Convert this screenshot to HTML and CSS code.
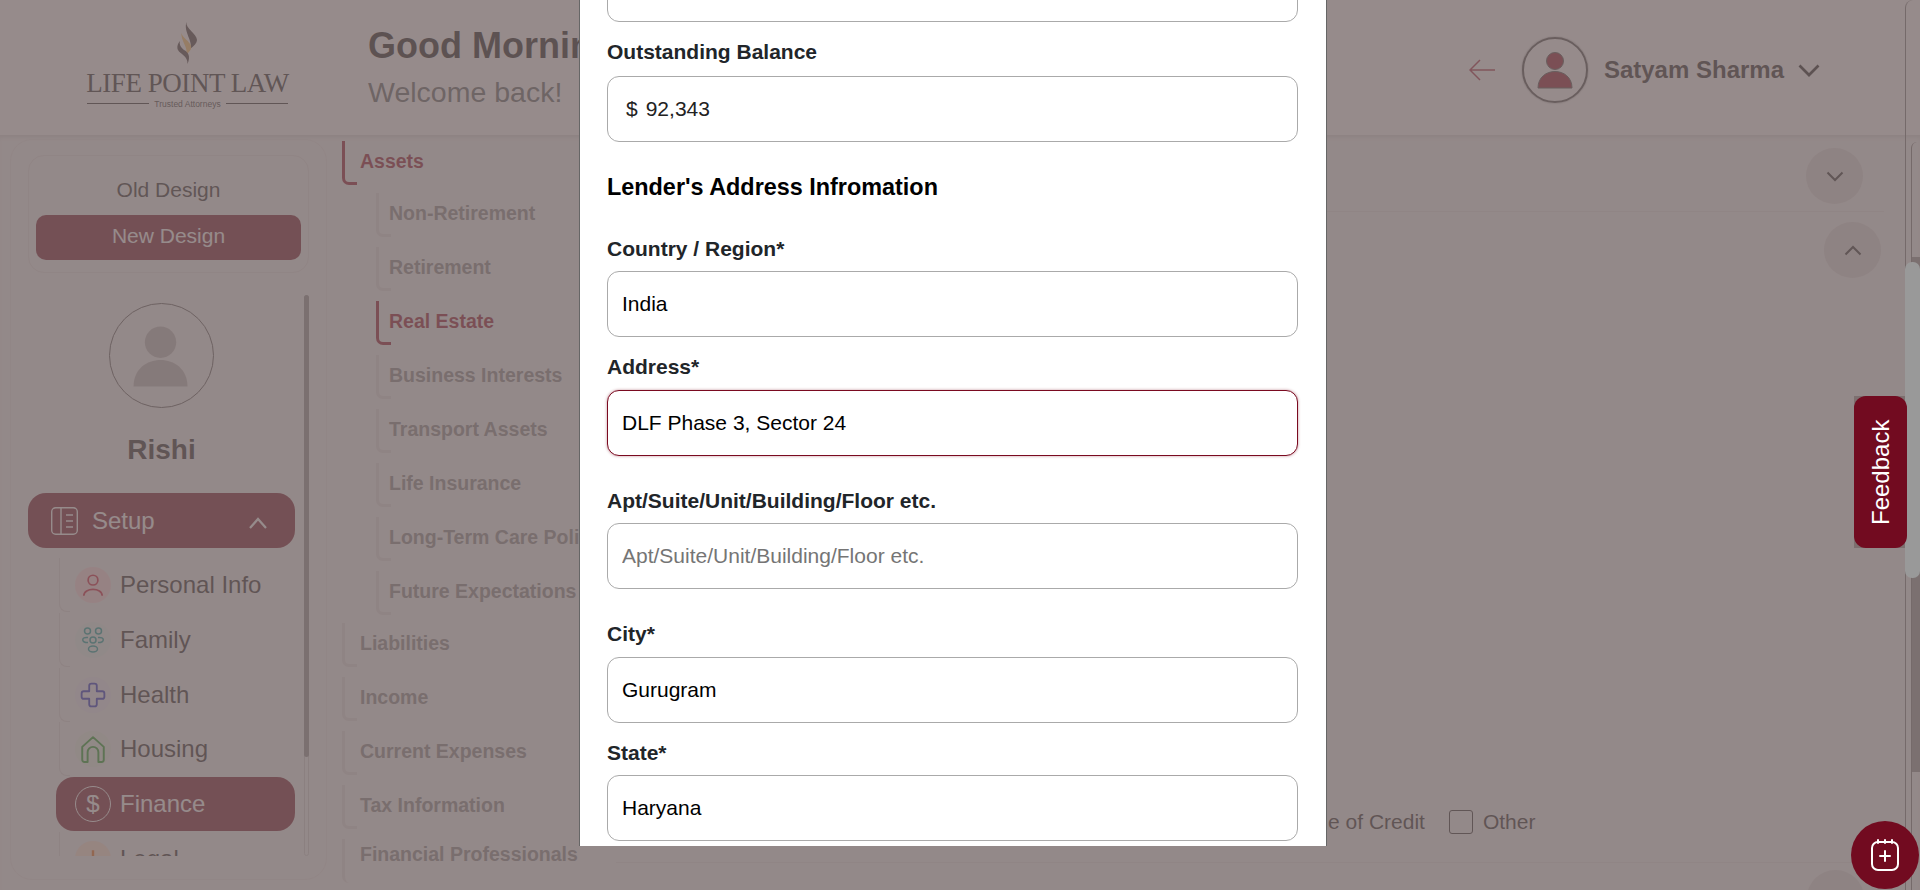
FILE: index.html
```html
<!DOCTYPE html>
<html lang="en">
<head>
<meta charset="UTF-8">
<title>Life Point Law</title>
<link rel="stylesheet" href="styles.css">
</head>
<body>

<header class="topbar">
    <div class="logo">
        <svg class="logo-flame" viewBox="0 0 21 42" width="21" height="42">
            <path fill="#3a3233" d="M9.5 0C8 6 20 12 20 18c0 3-3 6-7 9 4-7-7-17-3.500-27z"/>
            <path fill="#fec460" d="M4.500 10C4 16 16 20 14 27c-1 2-3 4-5 6 3-7-6-15-4.500-23z"/>
            <path fill="#3a3233" d="M3 19c-3 3-3 7-2 9 2 4 10 6 9.500 14 3.500-8 .5-12-3.500-14-3-3-5-5-4-9z"/>
        </svg>
        <div class="logo-name">LIFE POINT LAW</div>
        <div class="logo-tag"><span class="logo-rule"></span>Trusted Attorneys<span class="logo-rule"></span></div>
    </div>
    <div class="greeting">
        <h1>Good Morning, Satyam</h1>
        <p>Welcome back!</p>
    </div>
    <div class="account">
        <svg class="back-arrow" viewBox="0 0 26 22" width="26" height="22"><path d="M11 1 1 11l10 10M1 11h25" fill="none" stroke="#a8203a" stroke-width="1.500"/></svg>
        <div class="account-avatar">
            <svg viewBox="0 0 62 62" width="62" height="62">
                <circle cx="31" cy="22" r="8.500" fill="#90081f" stroke="#444" stroke-width="1"/>
                <path d="M14 49c0-22 34-22 34 0z" fill="#90081f" stroke="#444" stroke-width="1"/>
            </svg>
        </div>
        <span class="account-name">Satyam Sharma</span>
        <svg viewBox="0 0 22 13" width="22" height="13"><path d="M1.500 1.500 11 11l9.500-9.500" fill="none" stroke="#111" stroke-width="2.700"/></svg>
    </div>
</header>

<div class="page-body">
    <aside class="sidebar">
        <div class="design-switch">
            <div class="design-old">Old Design</div>
            <div class="design-new">New Design</div>
        </div>
        <div class="side-scroll">
            <div class="side-inner">
                <div class="profile-pic">
                    <svg viewBox="0 0 105 105" width="103" height="103">
                        <ellipse cx="51.500" cy="39" rx="16" ry="16" fill="#b9b9b9"/>
                        <path d="M24 84c0-36 55-36 55 0 0 0 0 0-3 0H27c-3 0-3 0-3 0z" fill="#b9b9b9"/>
                    </svg>
                </div>
                <div class="profile-name">Rishi</div>
                <div class="setup-btn">
                    <svg viewBox="0 0 27 28" width="27" height="28" fill="none" stroke="#fff" stroke-width="1.400">
                        <rect x=".7" y=".7" width="25.600" height="26.600" rx="4"/>
                        <path d="M10 1v26M15 8h7M15 14h7M15 20h7"/>
                    </svg>
                    <span>Setup</span>
                    <svg class="setup-chev" viewBox="0 0 18 12" width="18" height="12"><path d="M1 11 9 2l8 9" fill="none" stroke="#fff" stroke-width="2.200"/></svg>
                </div>
                <ul class="side-menu">
                    <li class="side-item">
                        <span class="side-icon side-icon-red">
                            <svg viewBox="0 0 24 24" width="26" height="26" fill="none" stroke="#d1102f" stroke-width="1.600"><circle cx="12" cy="7.500" r="4.500"/><path d="M3.500 22c0-8 17-8 17 0"/></svg>
                        </span>
                        Personal Info
                    </li>
                    <li class="side-item">
                        <span class="side-icon side-icon-teal">
                            <svg viewBox="0 0 26 26" width="26" height="26" fill="none" stroke="#0c9c98" stroke-width="1.500"><circle cx="7.500" cy="4" r="3"/><circle cx="18.500" cy="4" r="3"/><circle cx="13" cy="13" r="3"/><ellipse cx="13" cy="22" rx="4.500" ry="3"/><path d="M8 10.500c-7-1-7 5 0 5M18 10.500c7-1 7 5 0 5"/></svg>
                        </span>
                        Family
                    </li>
                    <li class="side-item">
                        <span class="side-icon side-icon-blue">
                            <svg viewBox="0 0 24 24" width="26" height="26" fill="none" stroke="#1c22c0" stroke-width="1.700" stroke-linejoin="round"><path d="M8.500 3.500a2 2 0 0 1 2-2h3a2 2 0 0 1 2 2v5h5a2 2 0 0 1 2 2v3a2 2 0 0 1-2 2h-5v5a2 2 0 0 1-2 2h-3a2 2 0 0 1-2-2v-5h-5a2 2 0 0 1-2-2v-3a2 2 0 0 1 2-2h5z"/></svg>
                        </span>
                        Health
                    </li>
                    <li class="side-item">
                        <span class="side-icon side-icon-green">
                            <svg viewBox="0 0 24 26" width="26" height="28" fill="none" stroke="#159a1c" stroke-width="1.800" stroke-linejoin="round"><path d="M2 11 12 2l10 9v12a2 2 0 0 1-2 2h-3V16a5 5 0 0 0-10 0v9H4a2 2 0 0 1-2-2z"/></svg>
                        </span>
                        Housing
                    </li>
                    <li class="side-item side-item-active">
                        <span class="side-icon side-icon-dollar">$</span>
                        Finance
                    </li>
                    <li class="side-item">
                        <span class="side-icon side-icon-orange">
                            <svg viewBox="0 0 24 24" width="26" height="26" fill="none" stroke="#ee6a10" stroke-width="2.200"><path d="M12 4v18M3 11h18"/></svg>
                        </span>
                        Legal
                    </li>
                </ul>
            </div>
            <div class="side-bar"><div class="side-thumb"></div></div>
        </div>
    </aside>

    <nav class="subnav">
        <div class="nav-link nav-active">Assets</div>
        <div class="nav-sub">
            <div class="nav-link">Non-Retirement</div>
            <div class="nav-link">Retirement</div>
            <div class="nav-link nav-active">Real Estate</div>
            <div class="nav-link">Business Interests</div>
            <div class="nav-link">Transport Assets</div>
            <div class="nav-link">Life Insurance</div>
            <div class="nav-link">Long-Term Care Policy</div>
            <div class="nav-link">Future Expectations</div>
        </div>
        <div class="nav-link">Liabilities</div>
        <div class="nav-link">Income</div>
        <div class="nav-link">Current Expenses</div>
        <div class="nav-link">Tax Information</div>
        <div class="nav-link nav-last">Financial Professionals</div>
    </nav>

    <main class="content">
        <div class="acc-row">
            <span class="round-btn">
                <svg viewBox="0 0 18 11" width="18" height="11"><path d="M1.500 1.500 9 9l7.500-7.500" fill="none" stroke="#222" stroke-width="2"/></svg>
            </span>
        </div>
        <div class="acc-row acc-open">
            <span class="round-btn">
                <svg viewBox="0 0 18 11" width="18" height="11"><path d="M1.500 9.500 9 2l7.500 7.500" fill="none" stroke="#222" stroke-width="2"/></svg>
            </span>
        </div>
        <div class="check-row">
            <span class="check-box"></span><span>Line of Credit</span>
            <span class="check-box check-box-next"></span><span>Other</span>
        </div>
        <div class="acc-foot"><span class="round-btn round-btn-cut"></span></div>
    </main>
</div>

<div class="scroll-track"><div class="scroll-inner"></div></div>

<div class="backdrop"></div>
<div class="scroll-thumb"></div>

<section class="modal">
    <div class="field field-cut"><input class="text-input" value=""></div>

    <div class="field">
        <label class="field-label field-label-money">Outstanding Balance</label>
        <div class="money-input"><span>$</span><input value="92,343"></div>
    </div>

    <h2 class="modal-heading">Lender's Address Infromation</h2>

    <div class="field">
        <label class="field-label field-label-tight">Country / Region*</label>
        <input class="text-input" value="India">
    </div>
    <div class="field field-wide">
        <label class="field-label">Address*</label>
        <input class="text-input text-input-focus" value="DLF Phase 3, Sector 24">
    </div>
    <div class="field field-wide">
        <label class="field-label field-label-tight">Apt/Suite/Unit/Building/Floor etc.</label>
        <input class="text-input" placeholder="Apt/Suite/Unit/Building/Floor etc.">
    </div>
    <div class="field">
        <label class="field-label">City*</label>
        <input class="text-input" value="Gurugram">
    </div>
    <div class="field">
        <label class="field-label field-label-tight">State*</label>
        <input class="text-input" value="Haryana">
    </div>
</section>

<button class="feedback-btn">Feedback</button>
<button class="notes-btn">
    <svg viewBox="0 0 28 32" width="28" height="32" fill="none" stroke="#fff" stroke-width="2" stroke-linecap="round">
        <rect x="1" y="3" width="26" height="28" rx="6"/>
        <path d="M7 1v3M14 1v3M21 1v3M14 12v10M9 17h10"/>
    </svg>
</button>

</body>
</html>
```
FILE: styles.css
```css
* {
    box-sizing: border-box;
}
html, body {
    height: 100%;
    margin: 0;
    overflow: hidden;
    font-family: "Liberation Sans", Arial, sans-serif;
    background: #fff;
    color: #000;
}

/* top bar */
.topbar {
    height: 135px;
    display: flex;
    align-items: center;
    padding-left: 87px;
    padding-right: 100px;
    background: #fff;
}
.logo {
    width: 201px;
    display: flex;
    flex-direction: column;
    align-items: center;
    margin-bottom: 5px;
}
.logo-name {
    font-family: "Liberation Serif", serif;
    font-size: 27px;
    line-height: 30px;
    white-space: nowrap;
    color: #222;
    letter-spacing: -.45px;
    margin-top: 4px;
}
.logo-tag {
    width: 100%;
    display: flex;
    align-items: center;
    gap: 5px;
    font-size: 8.500px;
    color: #333;
    white-space: nowrap;
    margin-top: 1px;
}
.logo-rule {
    flex: 1;
    height: 1px;
    background: #222;
}
.greeting {
    margin-left: 80px;
    margin-top: 2px;
}
.greeting h1 {
    margin: 0;
    font-size: 36px;
    line-height: 45px;
    white-space: nowrap;
    color: #111;
}
.greeting p {
    margin: 2px 0 0;
    font-size: 28.500px;
    line-height: 44px;
    color: #5a6060;
}
.account {
    margin-left: auto;
    margin-top: 5px;
    display: flex;
    align-items: center;
}
.back-arrow {
    margin-right: 27px;
}
.account-avatar {
    width: 66px;
    height: 66px;
    border: 2px solid #444;
    box-shadow: 0 0 2px rgba(0,0,0,.5);
    border-radius: 50%;
    margin-right: 16px;
    display: flex;
    align-items: center;
    justify-content: center;
}
.account-name {
    font-size: 24px;
    font-weight: bold;
    color: #1f2020;
    margin-right: 14px;
}

/* page under the bar */
.page-body {
    height: 755px;
    display: flex;
    background: #f3f4f4;
    box-shadow: inset 0 4px 4px -2px rgba(0,0,0,.12);
    overflow: hidden;
}
.sidebar {
    width: 317px;
    height: 741px;
    margin: 4px 0 0 10px;
    padding: 15px 17px 0;
    border: 1px solid #eaeaea;
    border-radius: 22px;
    flex-shrink: 0;
}
.design-switch {
    height: 118px;
    padding: 17px 7px 0;
    border: 1px solid #e4e4e4;
    border-radius: 16px;
    text-align: center;
}
.design-old {
    font-size: 21px;
    line-height: 34px;
    color: #222;
    margin-bottom: 8px;
}
.design-new {
    height: 45px;
    line-height: 42px;
    font-size: 21px;
    color: #fff;
    background: #720b20;
    border-radius: 10px;
}
.side-scroll {
    display: flex;
    height: 561px;
    margin-top: 22px;
}
.side-inner {
    width: 267px;
    overflow: hidden;
    padding-top: 8px;
    flex-shrink: 0;
}
.profile-pic {
    width: 105px;
    height: 105px;
    margin: 0 auto;
    border: 1px solid #555;
    border-radius: 50%;
    display: flex;
    align-items: center;
    justify-content: center;
}
.profile-name {
    margin-top: 26px;
    text-align: center;
    font-size: 28px;
    line-height: 32px;
    font-weight: bold;
    color: #1f2020;
}
.setup-btn {
    height: 55px;
    margin-top: 27px;
    padding-left: 23px;
    display: flex;
    align-items: center;
    gap: 14px;
    background: #720b20;
    border-radius: 18px;
    font-size: 24px;
    color: #fff;
}
.setup-chev {
    margin-left: auto;
    margin-right: 28px;
    margin-top: 4px;
}
.side-menu {
    list-style: none;
    margin: 10px 0 0;
    padding: 0 0 0 28px;
}
.side-item {
    position: relative;
    height: 54px;
    margin-bottom: .75px;
    padding-left: 19px;
    display: flex;
    align-items: center;
    gap: 9px;
    font-size: 24px;
    color: #1f2020;
}
.side-item::before {
    content: "";
    position: absolute;
    left: 3px;
    top: 0;
    bottom: 0;
    width: 10px;
    border-left: 1.500px solid #dcdcdc;
    border-bottom: 1.500px solid #dcdcdc;
    border-bottom-left-radius: 8px;
}
.side-item-active {
    background: #720b20;
    border-radius: 18px;
    color: #fff;
}
.side-item-active::before {
    display: none;
}
.side-icon {
    width: 36px;
    height: 36px;
    border-radius: 50%;
    flex-shrink: 0;
    display: flex;
    align-items: center;
    justify-content: center;
}
.side-icon-red { background: #ffd9de; }
.side-icon-teal { background: #e6f4f3; }
.side-icon-blue { background: #ecedf9; }
.side-icon-green { background: #e8f5e8; }
.side-icon-orange { background: #fde4d2; }
.side-icon-dollar {
    border: 1.500px solid #fff;
    font-size: 24px;
}
.side-bar {
    width: 5px;
    margin-left: 9px;
    border: 1px solid #cfcfcf;
    border-radius: 3px;
}
.side-thumb {
    height: 462px;
    margin: -1px;
    background: #8f8f8f;
    border-radius: 3px;
}

/* second level nav */
.subnav {
    width: 240px;
    margin-left: 15px;
    padding-top: 6px;
    flex-shrink: 0;
}
.nav-link {
    position: relative;
    height: 44px;
    margin-bottom: 10px;
    padding: 0 0 4px 18px;
    display: flex;
    align-items: center;
    font-size: 19.500px;
    font-weight: bold;
    color: #868686;
    white-space: nowrap;
}
.nav-link::before {
    content: "";
    position: absolute;
    left: 0;
    top: 0;
    bottom: 0;
    width: 12px;
    border-left: 3px solid #e0e0e0;
    border-bottom: 3px solid #e0e0e0;
    border-bottom-left-radius: 7px;
}
.nav-active {
    color: #90081f;
}
.nav-active::before {
    border-color: #90081f;
}
.nav-sub {
    margin: -2px 0 -2px 34px;
}
.nav-sub .nav-link {
    padding-left: 13px;
}
.nav-last {
    align-items: flex-start;
    padding-top: 4px;
}
.nav-last::before {
    border-bottom: none;
}

/* accordion under the modal */
.content {
    flex: 1;
    display: flex;
    flex-direction: column;
    padding-top: 13px;
    padding-right: 36px;
}
.acc-row {
    height: 64px;
    flex-shrink: 0;
    display: flex;
    justify-content: flex-end;
    padding-right: 21px;
    border-bottom: 1px solid #e6e6e6;
}
.acc-open {
    height: 66px;
    padding-right: 3px;
    padding-top: 10px;
    border-bottom: none;
}
.round-btn {
    width: 57px;
    height: 56px;
    border-radius: 50%;
    background: #dcdcdc;
    display: flex;
    align-items: center;
    justify-content: center;
}
.check-row {
    margin-top: 532px;
    height: 24px;
    flex-shrink: 0;
    padding-left: 684px;
    display: flex;
    align-items: center;
    gap: 10px;
    font-size: 21px;
    color: #1f2020;
}
.check-box {
    width: 24px;
    height: 24px;
    border: 1.500px solid #222;
    border-radius: 3px;
}
.check-box-next {
    margin-left: 14px;
}
.acc-foot {
    margin-top: 28px;
    margin-left: 34px;
    flex-shrink: 0;
    border-top: 1px solid #e6e6e6;
    display: flex;
    justify-content: flex-end;
}
.round-btn-cut {
    margin-top: 7px;
    margin-right: 20px;
    flex-shrink: 0;
}

/* page scrollbars */
.scroll-track {
    position: fixed;
    top: 0;
    bottom: 0;
    left: 1905px;
    width: 15px;
    border-left: 1px solid #777;
    border-top-left-radius: 8px;
}
.scroll-inner {
    position: absolute;
    top: 142px;
    bottom: 0;
    left: 5px;
    width: 10px;
    border-left: 1px solid #777;
    border-top-left-radius: 6px;
}
.scroll-inner::after {
    content: "";
    position: absolute;
    top: 115px;
    left: 0;
    right: 0;
    height: 515px;
    background: #8d8d8d;
}
.backdrop {
    position: fixed;
    inset: 0;
    background: rgba(117,103,102,.76);
}
.scroll-thumb {
    position: fixed;
    left: 1905px;
    top: 262px;
    width: 15px;
    height: 316px;
    background: #999;
    border-radius: 7px;
}

/* modal */
.modal {
    position: fixed;
    left: 578.500px;
    top: 0;
    width: 748.500px;
    height: 846px;
    padding: 0 28px 0 27.500px;
    background: #fff;
    border-left: 1px solid #666;
    border-right: 1px solid #666;
    overflow: hidden;
}
.field {
    margin-bottom: 18px;
}
.field-wide {
    margin-bottom: 33px;
}
.field-cut {
    margin-top: -44px;
}
.field-label {
    display: block;
    font-size: 21px;
    line-height: 24px;
    font-weight: bold;
    color: #212529;
    margin-bottom: 11px;
}
.field-label-money {
    margin-bottom: 12px;
}
.field-label-tight {
    margin-bottom: 10px;
}
.text-input, .money-input {
    display: block;
    width: 100%;
    height: 66px;
    padding: 0 14px;
    border: 1px solid #aaa;
    border-radius: 12px;
    font-family: "Liberation Sans", Arial, sans-serif;
    font-size: 21px;
    color: #000;
    background: #fff;
    outline: none;
}
.text-input::placeholder {
    color: #757575;
}
.text-input-focus {
    border: 1.500px solid #7a0a20;
    box-shadow: 0 0 3px rgba(122,10,32,.45);
}
.money-input {
    display: flex;
    align-items: center;
    padding-left: 18px;
    gap: 8px;
    color: #222;
}
.money-input input {
    flex: 1;
    border: none;
    outline: none;
    padding: 0;
    font-family: "Liberation Sans", Arial, sans-serif;
    font-size: 21px;
    color: #222;
}
.modal-heading {
    margin: 30px 0 35px;
    font-size: 23.400px;
    line-height: 30px;
    font-weight: bold;
    color: #000;
}

/* floating buttons */
.feedback-btn {
    position: fixed;
    left: 1854px;
    top: 396px;
    width: 53px;
    height: 152px;
    padding: 0;
    border: none;
    border-radius: 12px;
    background: #720b20;
    color: #fff;
    font-family: "Liberation Sans", Arial, sans-serif;
    font-size: 24px;
    writing-mode: vertical-rl;
    transform: rotate(180deg);
    text-align: center;
}
.notes-btn {
    position: fixed;
    left: 1851px;
    top: 821px;
    width: 68px;
    height: 68px;
    padding: 0;
    border: none;
    border-radius: 50%;
    background: #720b20;
    display: flex;
    align-items: center;
    justify-content: center;
}
```
